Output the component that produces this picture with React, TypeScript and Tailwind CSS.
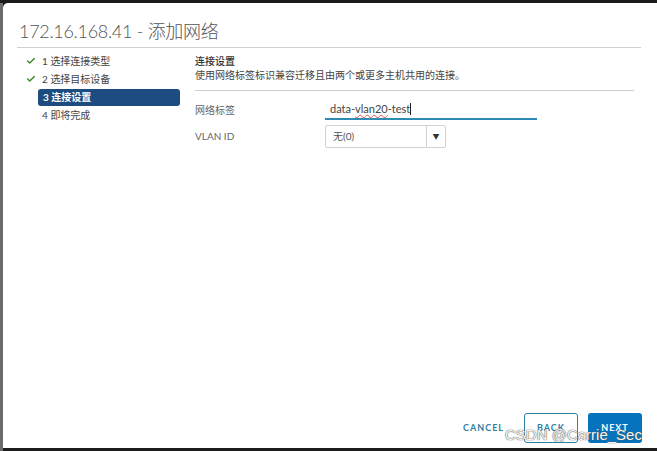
import { Check } from 'lucide-react';

const steps = [
  { n: 1, label: '选择连接类型', done: true },
  { n: 2, label: '选择目标设备', done: true },
  { n: 3, label: '连接设置', active: true },
  { n: 4, label: '即将完成' },
];

const font = 'font-[Lato,"Noto_Sans_CJK_SC",sans-serif]';

export default function App() {
  return (
    <div className={`relative w-[657px] h-[451px] overflow-hidden bg-[#1c1c1c] ${font}`}>
      <div className="absolute left-0 top-[3px] bottom-0 w-[3px] bg-[#6b6b6b]" />
      <div className="flex flex-col h-full pt-[3px] pl-[3px] pb-[3px]">
        <div className="flex flex-col flex-1 bg-white rounded-tl-[5px]">
          {/* Header */}
          <div className="mx-[14px] mr-[16px] pt-[17px] pb-[5px] border-b border-[#cfcfcf]">
            <h1 className="pl-[2px] text-[18px] leading-[22px] font-light text-[#555] tracking-[-0.3px]">
              172.16.168.41 - 添加网络
            </h1>
          </div>

          {/* Body */}
          <div className="flex flex-1">
            {/* Steps */}
            <nav className="w-[192px] pt-[4px] pl-[23px]">
              {steps.map((s) => (
                <div key={s.n} className="flex items-center h-[18px]">
                  <span className="w-[16px] flex justify-start">
                    {s.done && <Check className="w-[10px] h-[10px] text-[#3f8a2a]" strokeWidth={3.5} />}
                  </span>
                  {s.active ? (
                    <div className="flex items-center h-[17px] w-[142px] -ml-[4px] pl-[5px] rounded-[3px] bg-[#1d4c80] text-white font-bold text-[10px]">
                      {s.n} {s.label}
                    </div>
                  ) : (
                    <span className="text-[10px] text-[#444]">
                      {s.n} {s.label}
                    </span>
                  )}
                </div>
              ))}
            </nav>

            {/* Content */}
            <div className="flex-1 pt-[6px] pr-[23px]">
              <div className="text-[10px] leading-[14px] text-[#333] font-medium">连接设置</div>
              <div className="text-[10px] leading-[14px] text-[#444]">
                使用网络标签标识兼容迁移且由两个或更多主机共用的连接。
              </div>
              <div className="border-b border-[#cfcfcf] mt-[8px]" />

              <div className="flex items-center mt-[10px] h-[18px]">
                <span className="w-[130px] text-[10px] text-[#666]">网络标签</span>
                <div className="w-[212px] h-[19px] border-b-2 border-[#2d8bb4] flex items-center pl-[5px] text-[11px] text-[#444]">
                  <span>data-</span>
                  <span className="underline decoration-wavy decoration-[#e05050] decoration-[0.5px] underline-offset-[1px]">vlan20</span>
                  <span>-test</span>
                  <span className="w-px h-[12px] bg-[#222]" />
                </div>
              </div>

              <div className="flex items-center mt-[6px]">
                <span className="w-[130px] text-[10px] text-[#666]">VLAN ID</span>
                <div className="w-[121px] h-[23px] border border-[#d2d2d2] rounded-[2px] flex items-center">
                  <span className="flex-1 pl-[7px] text-[10px] text-[#555]">无(0)</span>
                  <span className="w-[19px] h-full border-l border-[#d2d2d2] flex items-center justify-center text-[7px] text-[#333]">
                    ▼
                  </span>
                </div>
              </div>
            </div>
          </div>

          {/* Footer */}
          <div className="flex items-center justify-end gap-[10px] pr-[15px] pb-[5px]">
            <button className="pr-[10px] h-[30px] text-[9px] font-bold tracking-[1px] text-[#2f7fa6]">CANCEL</button>
            <button className="w-[54px] h-[30px] border border-[#2f7fa6] rounded-[3px] text-[9px] font-bold tracking-[1px] text-[#2f7fa6]">
              BACK
            </button>
            <button className="w-[54px] h-[30px] rounded-[3px] bg-[#0574bd] text-[9px] font-bold tracking-[1px] text-white">
              NEXT
            </button>
          </div>
        </div>
      </div>

      <div className="absolute left-[505px] top-[426px] text-[15px] leading-[18px] font-['Liberation_Sans',sans-serif] text-[#f4f4f4] [text-shadow:0_0_1px_#555,0_0_1px_#555]">
        CSDN @Carrie_Sec
      </div>
    </div>
  );
}
